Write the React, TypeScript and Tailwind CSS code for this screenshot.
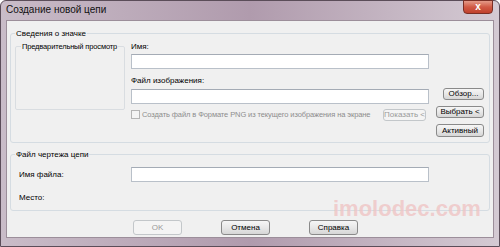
import type { ReactNode } from "react";

function Btn({ children, disabled, className }: { children: ReactNode; disabled?: boolean; className?: string }) {
  return (
    <div
      className={
        "flex items-center justify-center rounded-[3px] border text-[8px] leading-none whitespace-nowrap shrink-0 " +
        (disabled
          ? "border-[#c3c7ca] bg-[#f4f4f4] text-[#9a9a9a] "
          : "border-[#8a8a8a] bg-gradient-to-b from-[#f6f6f6] via-[#e8e8e8] to-[#d6d6d6] text-black ") +
        (className ?? "")
      }
    >
      {children}
    </div>
  );
}

function TextBox({ className }: { className?: string }) {
  return <div className={"h-[15px] border border-[#b9c0c9] border-t-[#a4abb5] bg-white " + (className ?? "")} />;
}

export default function App() {
  return (
    <div className="w-[500px] h-[247px] font-['Liberation_Sans',Arial,sans-serif] text-black bg-white">
      <div className="relative h-[247px] rounded-t-[6px] border border-[#5b4d59] bg-gradient-to-r from-[#c9bcc8] via-[#b09bad] to-[#d4cad3] flex flex-col">
        {/* title bar */}
        <div className="h-[19px] flex items-start shrink-0">
          <span className="pl-[5px] pt-[3px] text-[10px] leading-[12px] text-[#111]">Создание новой цепи</span>
          <div className="ml-auto mr-[6px] w-[30px] h-[14px] -mt-[1px] rounded-b-[4px] border border-[#7a2f25] bg-gradient-to-b from-[#e39a88] via-[#d15a45] to-[#c0402c] flex items-center justify-center">
            <span className="text-white text-[10px] font-bold leading-none">x</span>
          </div>
        </div>

        {/* client area */}
        <div className="mx-[5px] h-[218px] border border-[#9c8e9a] bg-[#f0f0f0] flex flex-col">
          {/* Сведения о значке */}
          <fieldset className="mt-[7px] mx-[3px] h-[115px] border border-[#d5dce2] rounded-[3px] px-[4px] flex">
            <legend className="px-[1px] text-[8px] leading-[11px]">Сведения о значке</legend>
            <div className="flex w-full">
              <fieldset className="mt-[2px] w-[110px] min-w-0 h-[69px] border border-[#d9dde1] rounded-[2px] shrink-0">
                <legend className="ml-[5px] px-[1px] text-[7.5px] leading-[11px] whitespace-nowrap tracking-[-0.15px]">Предварительный просмотр</legend>
              </fieldset>
              <div className="ml-[6px] w-[298px] flex flex-col shrink-0">
                <div className="mt-[2px] text-[8px] leading-[11px]">Имя:</div>
                <TextBox className="mt-[2px]" />
                <div className="mt-[6px] text-[8px] leading-[11px]">Файл изображения:</div>
                <TextBox className="mt-[3px]" />
                <div className="mt-[5px] h-[11px] flex items-center">
                  <div className="w-[9px] h-[9px] border border-[#b5b5b5] bg-[#f4f4f4] shrink-0" />
                  <span className="ml-[2px] text-[7.5px] leading-[11px] text-[#8d8d8d] whitespace-nowrap tracking-[-0.1px]">
                    Создать файл в Формате PNG из текущего изображения на экране
                  </span>
                  <Btn disabled className="ml-auto w-[43px] h-[12px] mr-[3px]">Показать &lt;</Btn>
                </div>
              </div>
              <div className="ml-auto mr-[1px] flex flex-col items-end">
                <Btn className="mt-[49px] w-[41px] h-[12px]">Обзор...</Btn>
                <Btn className="mt-[6px] w-[48px] h-[12px]">Выбрать &lt;</Btn>
                <Btn className="mt-[6px] w-[48px] h-[13px]">Активный</Btn>
              </div>
            </div>
          </fieldset>

          {/* Файл чертежа цепи */}
          <fieldset className="mt-[6px] mx-[3px] h-[62px] border border-[#d5dce2] rounded-[3px] pl-[8px] pr-[4px] flex flex-col">
            <legend className="-ml-[4px] px-[1px] text-[8px] leading-[11px]">Файл чертежа цепи</legend>
            <div className="mt-[7px] flex items-center">
              <span className="w-[112px] text-[8px] leading-[11px]">Имя файла:</span>
              <TextBox className="w-[298px]" />
            </div>
            <div className="mt-[10px] text-[8px] leading-[11px]">Место:</div>
          </fieldset>

          {/* buttons */}
          <div className="mt-[9px] flex pl-[126px] gap-[39px]">
            <Btn disabled className="w-[49px] h-[15px]">OK</Btn>
            <Btn className="w-[49px] h-[15px]">Отмена</Btn>
            <Btn className="w-[49px] h-[15px]">Справка</Btn>
          </div>
        </div>

        {/* watermark */}
        <div className="absolute left-[332px] top-[197px] text-[22px] font-bold leading-none text-[#efc4c4]/80 pointer-events-none">
          imolodec.com
        </div>
      </div>
    </div>
  );
}
